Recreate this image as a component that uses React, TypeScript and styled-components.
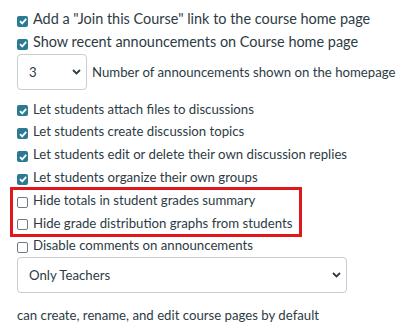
import styled, { createGlobalStyle } from 'styled-components'

const GlobalStyle = createGlobalStyle`
  body {
    margin: 0;
    background: #ffffff;
    font-family: Lato, "Open Sans", sans-serif;
    color: #2d3b45;
  }
`

type Option = { label: string; checked: boolean }

const topOptions: Option[] = [
  { label: 'Add a "Join this Course" link to the course home page', checked: true },
  { label: 'Show recent announcements on Course home page', checked: true },
]

const studentOptions: Option[] = [
  { label: 'Let students attach files to discussions', checked: true },
  { label: 'Let students create discussion topics', checked: true },
  { label: 'Let students edit or delete their own discussion replies', checked: true },
  { label: 'Let students organize their own groups', checked: true },
]

const hiddenOptions: Option[] = [
  { label: 'Hide totals in student grades summary', checked: false },
  { label: 'Hide grade distribution graphs from students', checked: false },
]

const BIG = 14.45
const SMALL = 13.2

function Check({ checked }: { checked: boolean }) {
  return (
    <Box $checked={checked}>
      {checked && (
        <svg width="10" height="10" viewBox="0 0 10 10">
          <path d="M2 5.2 L4.2 7.4 L8.2 2.8" fill="none" stroke="#fff" strokeWidth="1.8" />
        </svg>
      )}
    </Box>
  )
}

function Chevron() {
  return (
    <svg width="9" height="6" viewBox="0 0 9 6">
      <path d="M1 1 L4.5 4.5 L8 1" fill="none" stroke="#2d3b45" strokeWidth="1.8" />
    </svg>
  )
}

function CheckRow({ label, checked, size = SMALL }: Option & { size?: number }) {
  return (
    <Row $size={size}>
      <Check checked={checked} />
      <span>{label}</span>
    </Row>
  )
}

export default function App() {
  return (
    <>
      <GlobalStyle />
      <Page>
        <Group $top={8}>
          {topOptions.map((o) => (
            <CheckRow key={o.label} {...o} size={BIG} />
          ))}
        </Group>
        <SelectLine>
          <Select $width={70}>
            <span>3</span>
            <Chevron />
          </Select>
          <span>Number of announcements shown on the homepage</span>
        </SelectLine>
        <Group $top={8}>
          {studentOptions.map((o) => (
            <CheckRow key={o.label} {...o} />
          ))}
          <Highlight>
            {hiddenOptions.map((o) => (
              <CheckRow key={o.label} {...o} />
            ))}
          </Highlight>
          <CheckRow label="Disable comments on announcements" checked={false} />
        </Group>
        <Select $width={330}>
          <span>Only Teachers</span>
          <Chevron />
        </Select>
        <Note>can create, rename, and edit course pages by default</Note>
      </Page>
    </>
  )
}

const Page = styled.div`
  padding: 0 17px;
  font-size: ${SMALL}px;
`

const Group = styled.div<{ $top: number }>`
  padding-top: ${(p) => p.$top}px;
`

const Row = styled.div<{ $size: number }>`
  display: flex;
  align-items: center;
  gap: 5px;
  height: 22.8px;
  line-height: 22.8px;
  font-size: ${(p) => p.$size}px;
  white-space: nowrap;
`

const Box = styled.span<{ $checked: boolean }>`
  flex: none;
  width: 11px;
  height: 11px;
  margin-top: 4px;
  border-radius: 2px;
  box-sizing: border-box;
  display: flex;
  align-items: center;
  justify-content: center;
  background: ${(p) => (p.$checked ? '#2a7b92' : '#ffffff')};
  border: ${(p) => (p.$checked ? 'none' : '1px solid #6f7a82')};
`

const SelectLine = styled.div`
  display: flex;
  align-items: center;
  gap: 5px;
  white-space: nowrap;
`

const Select = styled.div<{ $width: number }>`
  flex: none;
  width: ${(p) => p.$width}px;
  height: 36px;
  box-sizing: border-box;
  border: 1px solid #c7cdd1;
  border-radius: 4px;
  display: flex;
  align-items: center;
  justify-content: space-between;
  padding: 0 5px 0 11px;
  background: #fff;
`

const Highlight = styled.div`
  position: relative;

  &::before {
    content: '';
    position: absolute;
    left: -7px;
    top: -2px;
    width: 292px;
    height: 50px;
    box-sizing: border-box;
    border: 3px solid #e0181b;
    pointer-events: none;
  }
`

const Note = styled.p`
  margin: 14px 0 0;
  white-space: nowrap;
`
